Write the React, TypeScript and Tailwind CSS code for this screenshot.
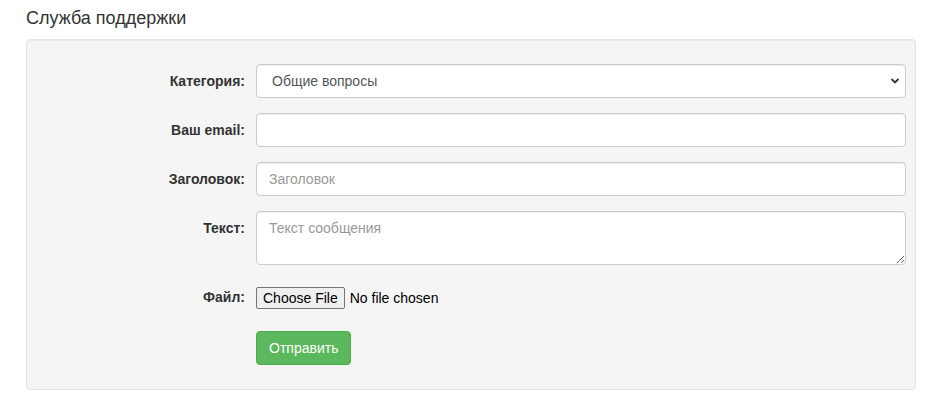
import React from "react";

const labelCls =
  "w-[229px] shrink-0 pr-[11px] pt-[7px] text-right text-[14px] leading-[20px] font-bold text-[#333]";
const inputCls =
  "block w-full h-[34px] rounded-[4px] border border-[#ccc] bg-white px-[12px] text-[14px] text-[#555] shadow-[inset_0_1px_1px_rgba(0,0,0,0.075)] outline-none placeholder:text-[#999]";

export default function App() {
  return (
    <div
      className="min-h-[402px] bg-white pl-[26px] pt-[8px]"
      style={{ fontFamily: '"Liberation Sans", Arial, sans-serif' }}
    >
      {/* Page title */}
      <h4 className="mb-[11px] text-[18px] leading-[20px] font-normal text-[#333]">
        Служба поддержки
      </h4>

      {/* Well with the form */}
      <div className="w-[890px] rounded-[4px] border border-[#e3e3e3] bg-[#f5f5f5] pt-[24px] pb-[24px] pr-[9px] shadow-[inset_0_1px_1px_rgba(0,0,0,0.05)]">
        <form className="flex flex-col gap-[15px]" onSubmit={(e) => e.preventDefault()}>
          <div className="flex">
            <label className={labelCls}>Категория:</label>
            <div className="relative flex-1">
              <select className={`${inputCls} appearance-none pl-[15px]`} defaultValue="general">
                <option value="general">Общие вопросы</option>
                <option value="billing">Оплата</option>
                <option value="tech">Технические проблемы</option>
              </select>
              <svg
                className="pointer-events-none absolute right-[6px] top-[13px] h-[8px] w-[10px]"
                viewBox="0 0 10 8"
                fill="none"
              >
                <path d="M1.5 2 L5 5.5 L8.5 2" stroke="#333" strokeWidth="1.8" />
              </svg>
            </div>
          </div>

          <div className="flex">
            <label className={labelCls}>Ваш email:</label>
            <div className="flex-1">
              <input type="email" className={inputCls} />
            </div>
          </div>

          <div className="flex">
            <label className={labelCls}>Заголовок:</label>
            <div className="flex-1">
              <input type="text" placeholder="Заголовок" className={inputCls} />
            </div>
          </div>

          <div className="flex">
            <label className={labelCls}>Текст:</label>
            <div className="flex-1">
              <textarea
                rows={2}
                placeholder="Текст сообщения"
                className="block h-[54px] w-full resize-y rounded-[4px] border border-[#ccc] bg-white px-[12px] py-[6px] text-[14px] leading-[20px] text-[#555] shadow-[inset_0_1px_1px_rgba(0,0,0,0.075)] outline-none placeholder:text-[#999]"
              />
            </div>
          </div>

          <div className="flex">
            <label className={labelCls}>Файл:</label>
            <div className="flex h-[36px] flex-1 items-start pt-[7px]">
              <span className="flex h-[22px] items-center rounded-[2px] border border-[#767676] bg-[#efefef] px-[6px] text-[14px] leading-[20px] text-black">
                Choose File
              </span>
              <span className="ml-[5px] text-[14px] leading-[22px] text-black">No file chosen</span>
            </div>
          </div>

          <div className="flex">
            <div className="w-[229px] shrink-0" />
            <button
              type="submit"
              className="h-[34px] rounded-[4px] border border-[#4cae4c] bg-[#5cb85c] px-[12px] text-[14px] leading-[20px] text-white"
            >
              Отправить
            </button>
          </div>
        </form>
      </div>
    </div>
  );
}
